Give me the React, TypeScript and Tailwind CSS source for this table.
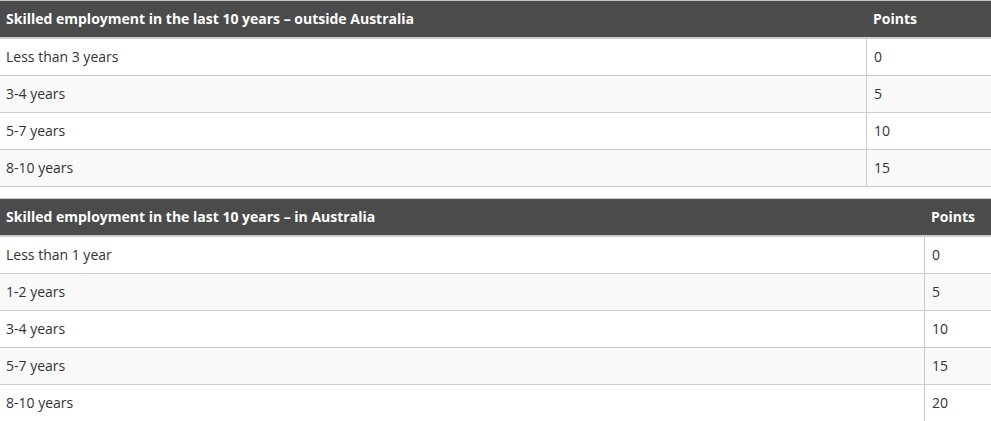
import React from "react";

type T = { title: string; divider: number; rows: [string, string][] };

const tables: T[] = [
  {
    title: "Skilled employment in the last 10 years – outside Australia",
    divider: 866,
    rows: [
      ["Less than 3 years", "0"],
      ["3-4 years", "5"],
      ["5-7 years", "10"],
      ["8-10 years", "15"],
    ],
  },
  {
    title: "Skilled employment in the last 10 years – in Australia",
    divider: 924,
    rows: [
      ["Less than 1 year", "0"],
      ["1-2 years", "5"],
      ["3-4 years", "10"],
      ["5-7 years", "15"],
      ["8-10 years", "20"],
    ],
  },
];

function Table({ t }: { t: T }) {
  return (
    <div className="w-[991px]">
      <div className="flex h-[39px] border-t border-b-2 border-t-[#c8c8c8] border-b-[#cccccc] bg-[#4b4b4b] text-white font-bold text-[14px]">
        <div style={{ width: t.divider }} className="shrink-0 flex items-center pl-[6px] pb-[1px]">
          {t.title}
        </div>
        <div className="flex items-center pl-[7px] pb-[1px]">Points</div>
      </div>
      {t.rows.map((r, i) => (
        <div
          key={i}
          className={
            "flex h-[37px] border-b border-[#cccccc] text-[14px] text-[#333333] " +
            (i % 2 === 1 ? "bg-[#f9f9f9]" : "bg-white")
          }
        >
          <div style={{ width: t.divider }} className="shrink-0 flex items-center pl-[6px] pb-[2px]">
            {r[0]}
          </div>
          <div className="flex items-center pl-[7px] pb-[2px] border-l border-[#cccccc] flex-1">{r[1]}</div>
        </div>
      ))}
    </div>
  );
}

export default function App() {
  return (
    <div
      className="bg-white w-[991px] h-[421px] overflow-hidden flex flex-col gap-[11px]"
      style={{ fontFamily: '"Open Sans", sans-serif' }}
    >
      {tables.map((t, i) => (
        <Table key={i} t={t} />
      ))}
    </div>
  );
}
